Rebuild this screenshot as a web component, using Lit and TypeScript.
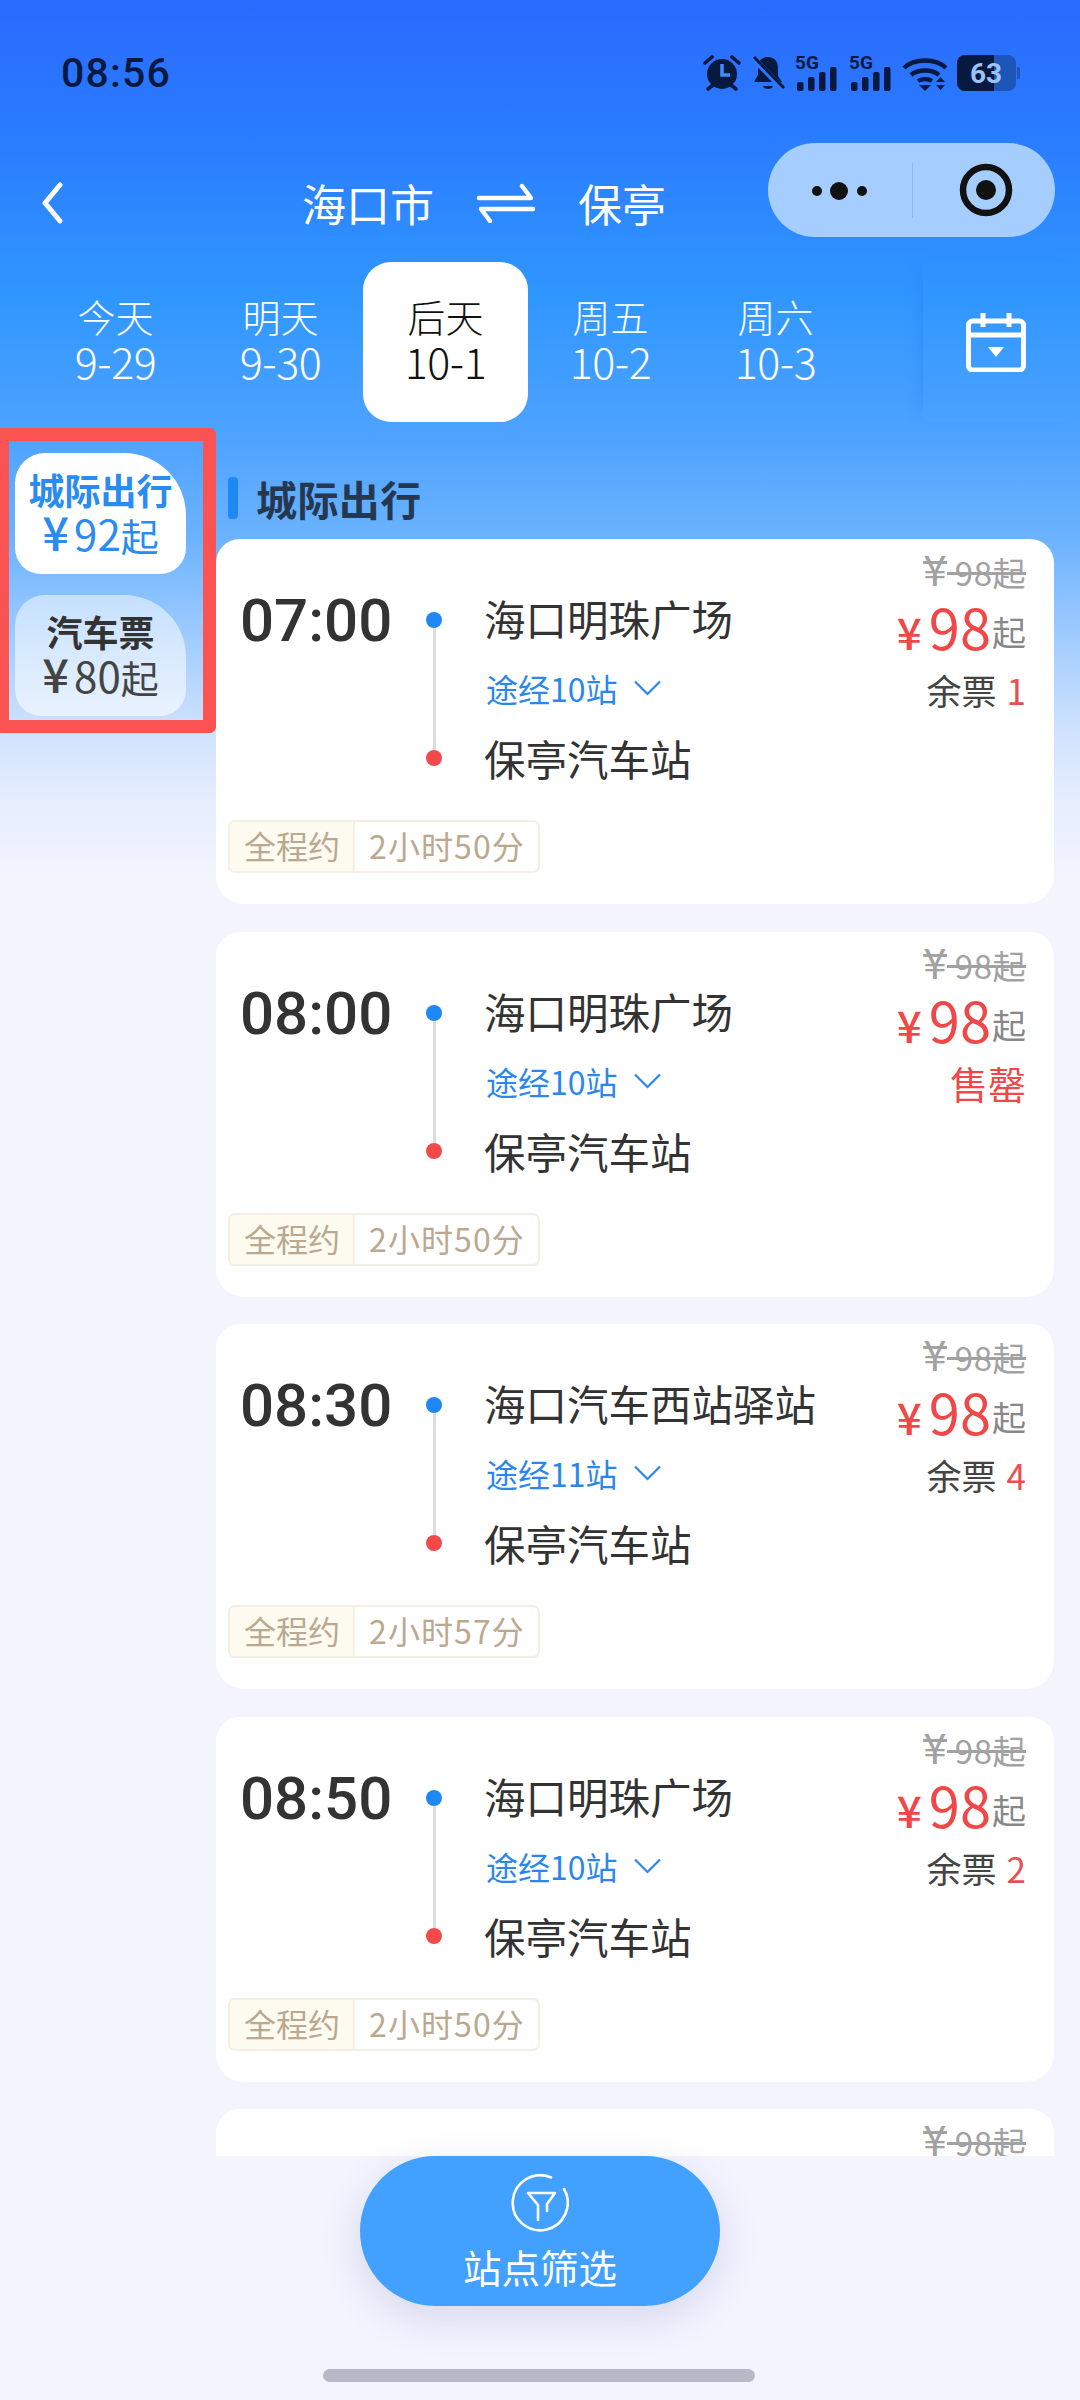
import { LitElement, html, css, svg } from "lit";
import { customElement } from "lit/decorators.js";

interface Trip { time: string; from: string; via: string; dur: string; left: string; sold?: boolean; }
const trips: Trip[] = [
  { time: "07:00", from: "海口明珠广场", via: "途经10站", dur: "2小时50分", left: "1" },
  { time: "08:00", from: "海口明珠广场", via: "途经10站", dur: "2小时50分", left: "", sold: true },
  { time: "08:30", from: "海口汽车西站驿站", via: "途经11站", dur: "2小时57分", left: "4" },
  { time: "08:50", from: "海口明珠广场", via: "途经10站", dur: "2小时50分", left: "2" },
];
const days = [["今天", "9-29"], ["明天", "9-30"], ["后天", "10-1"], ["周五", "10-2"], ["周六", "10-3"]];

const signal = svg`<svg width="42" height="36" viewBox="0 0 42 36" class="ic">
  <text x="0" y="14" font-family="Roboto" font-weight="700" font-size="19" fill="#07193f">5G</text>
  <rect x="2" y="27" width="6.5" height="9" rx="2" fill="#07193f"/><rect x="13" y="22" width="6.5" height="14" rx="2" fill="#07193f"/>
  <rect x="24" y="17" width="6.5" height="19" rx="2" fill="#07193f"/><rect x="35" y="12" width="6.5" height="24" rx="2" fill="#07193f"/></svg>`;

@customElement("app-root")
export class AppRoot extends LitElement {
  static styles = css`
    :host { display: block; width: 1080px; height: 2400px; position: relative; overflow: hidden;
      font-family: "Noto Sans CJK SC", "Noto Sans", sans-serif; color: #333;
      background: linear-gradient(180deg, #2a6aff 0, #2a7bff 130px, #3097ff 300px, #4fa3ff 440px, #6cb3ff 540px, #a6cfff 650px, #cfe2fd 730px, #e6edfe 800px, #f3f4fe 880px, #f3f4fe 100%); }
    .status { height: 143px; display: flex; justify-content: space-between; padding: 55px 60px 0 61px; box-sizing: border-box; color: #07193f; }
    .clock { font: 500 41px/36px Roboto, sans-serif; letter-spacing: 1.2px; }
    .icons { display: flex; height: 36px; }
    .ic { display: block; }
    .al { margin-right: 10px; } .mu { margin-right: 10px; } .s1 { margin-right: 12px; } .s2 { margin-right: 11px; } .wi { margin-right: 9px; }
    .nav { height: 119px; display: flex; align-items: flex-start; color: #fff; }
    .back { margin: 39px 0 0 41px; }
    .route { display: flex; align-items: center; height: 60px; margin: 30px 0 0 239px; font-size: 44px; line-height: 60px; }
    .swap { margin: 0 43px; }
    .capsule { margin-left: auto; margin-right: 25px; width: 287px; height: 94px; border-radius: 47px; background: #a5cdfe; display: flex; align-items: center; }
    .dots { width: 144px; height: 94px; }
    .sep { width: 1px; height: 55px; background: #8fb8e8; }
    .target { margin-left: 46px; }
    .dates { height: 160px; display: flex; }
    .scroll { width: 923px; box-sizing: border-box; padding-left: 33px; display: flex; }
    .day { width: 165px; height: 160px; border-radius: 28px; color: #fff; text-align: center; font-size: 38px; line-height: 45px; box-sizing: border-box; padding-top: 31px; font-weight: 300; }
    .day span { display: block; font-size: 43px; letter-spacing: -.5px; }
    .day.on { background: #fff; color: #111; }
    .cal { flex: 1; display: flex; padding: 50px 0 0 43px; box-sizing: border-box; box-shadow: -12px 0 16px -12px rgba(20,110,230,.35); }
    .main { display: flex; height: 1734px; overflow: hidden; }
    .side { width: 216px; flex: none; padding: 31px 0 0 15px; box-sizing: border-box; }
    .tab { width: 171px; height: 121px; margin-bottom: 21px; border-radius: 30px 62px 26px 26px; text-align: center; box-sizing: border-box; padding-top: 16px; background: linear-gradient(180deg, rgba(255,255,255,.5), rgba(255,255,255,.6)); color: #444; font-size: 38px; line-height: 41px; }
    .tab.on { background: #fff; color: #2a8bf0; }
    .tab b { display: block; font-size: 36px; font-weight: 600; color: #333; }
    .tab.on b { color: #2a8bf0; }
    .tab i { font-style: normal; font-size: 42px; margin-left: 5px; }
    .tab .yen { font-size: 47px; font-weight: 500; line-height: 41px; }
    .yen { font-size: 42px; }
    .list { flex: 1; padding-right: 26px; }
    .head { height: 117px; display: flex; align-items: center; padding: 35px 0 0 12px; box-sizing: border-box; font-size: 41px; font-weight: 600; color: #26384f; letter-spacing: .4px; }
    .head::before { content: ""; width: 10px; height: 42px; border-radius: 4px; background: #1e88f5; margin-right: 18px; }
    .card { height: 365px; margin-bottom: 27.5px; background: #fff; border-radius: 24px 24px 28px 28px; box-sizing: border-box; padding: 0 28px 0 24px; }
    .top { display: flex; height: 281px; }
    .time { width: 186px; flex: none; margin-top: 42px; font: 500 60px/80px Roboto, sans-serif; color: #333; }
    .rail { width: 16px; flex: none; height: 154px; margin-top: 73px; display: flex; flex-direction: column; align-items: center; }
    .dot { width: 16px; height: 16px; border-radius: 50%; background: #1e88f5; flex: none; }
    .dot.end { background: #f24a4a; }
    .rail span { width: 3px; flex: 1; background: #dcdcdc; }
    .stops { margin-left: 42px; flex: 1; padding-top: 49px; font-size: 41.5px; line-height: 60px; color: #333; }
    .via { margin: 10px 0; height: 60px; display: flex; align-items: center; font-size: 32px; color: #2b87ee; padding-left: 2px; }
    .via svg { margin-left: 16px; }
    .price { text-align: right; padding-top: 9px; white-space: nowrap; }
    .old { font-size: 33px; line-height: 40px; color: #a2a2a2; text-decoration: line-through; letter-spacing: .5px; }
    .now { margin-top: 2px; height: 64px; line-height: 64px; font-size: 34px; color: #888; }
    .now em { font-style: normal; color: #f04848; font-size: 56px; margin-right: 1px; }
    .now u { text-decoration: none; color: #f04848; font-size: 44px; font-weight: 500; margin-right: 7px; }
    .now small { font-size: 34px; position: relative; top: -4px; }
    .left { margin-top: 7px; font-size: 35px; line-height: 50px; color: #444; }
    .left span { color: #e8504f; margin-left: 10px; }
    .sold { color: #f04848; font-size: 38px; }
    .tags { margin-left: -12px; display: inline-flex; height: 53px; border: 2px solid #f4efe2; border-radius: 7px; box-sizing: border-box; font-size: 32px; line-height: 47px; color: #bba98f; overflow: hidden; }
    .tags span:first-child { background: #fdfaf0; padding: 0 13px 0 14px; border-right: 2px solid #f4efe2; }
    .tags span:last-child { padding: 0 13px 0 14px; letter-spacing: 1.1px; }
    .filter { position: absolute; left: 360px; top: 2156px; width: 360px; height: 150px; border-radius: 75px; background: #42a0ff; box-shadow: 0 12px 40px rgba(60,70,130,.16); color: #fff; text-align: center; font-size: 38.5px; line-height: 50px; box-sizing: border-box; padding-top: 18px; }
    .filter svg { display: block; margin: 0 auto 9px; }
    .home { position: absolute; left: 323px; top: 2369px; width: 432px; height: 13px; border-radius: 7px; background: #b8b8c6; }
    .mark { position: absolute; left: -4px; top: 428px; width: 220px; height: 305px; box-sizing: border-box; border: 13px solid #fb5352; border-radius: 6px; }
  `;

  card(t: Trip) {
    return html`<div class="card">
      <div class="top">
        <div class="time">${t.time}</div>
        <div class="rail"><div class="dot"></div><span></span><div class="dot end"></div></div>
        <div class="stops">
          <div>${t.from}</div>
          <div class="via">${t.via}<svg width="27" height="16" viewBox="0 0 27 16" fill="none" stroke="#2b87ee" stroke-width="2.2"><path d="M1 1.5 13.5 14 26 1.5"/></svg></div>
          <div>保亭汽车站</div>
        </div>
        <div class="price">
          <div class="old"><span class="yen">¥</span> 98起</div>
          <div class="now"><u>¥</u><em>98</em><small>起</small></div>
          ${t.sold ? html`<div class="left sold">售罄</div>` : html`<div class="left">余票<span>${t.left}</span></div>`}
        </div>
      </div>
      <div class="tags"><span>全程约</span><span>${t.dur}</span></div>
    </div>`;
  }

  render() {
    return html`
      <div class="status">
        <div class="clock">08:56</div>
        <div class="icons">
          <svg class="ic al" width="38" height="36" viewBox="0 0 38 36"><circle cx="19" cy="19" r="15" fill="#07193f"/><path d="M19 9v11h8" stroke="#3b8cff" stroke-width="3.6" fill="none"/><path d="M2 8 9 2M36 8 29 2M5 34l5-4M33 34l-5-4" stroke="#07193f" stroke-width="3.6" stroke-linecap="round"/></svg>
          <svg class="ic mu" width="34" height="36" viewBox="0 0 34 36"><path d="M17 2c7 0 10 5 10 11v8l4 6H3l4-7v-7C7 7 10 2 17 2Z" fill="#07193f"/><path d="M12 31h10c-1 4-9 4-10 0Z" fill="#07193f"/><path d="M2 3 32 34" stroke="#2a78ff" stroke-width="6"/><path d="M3 2 33 33" stroke="#07193f" stroke-width="3"/></svg>
          <span class="s1">${signal}</span><span class="s2">${signal}</span>
          <svg class="ic wi" width="46" height="36" viewBox="0 0 46 36" fill="none" stroke="#07193f" stroke-width="4.4"><path d="M2 13C12 3 34 3 44 13"/><path d="M9 20c7-6 21-6 28 0"/><path d="M16 26c4-2.5 10-2.5 14 0"/><path d="M17 30h12l-6 6Z" fill="#07193f" stroke="none"/><path d="M34 27h9l-4.5-5ZM34 30h9l-4.5 5Z" fill="#07193f" stroke="none"/></svg>
          <svg class="ic" width="63" height="36" viewBox="0 0 63 36"><rect x="0" y="0" width="59" height="36" rx="8" fill="#1c56b8"/><path d="M60 12h1a2 2 0 0 1 2 2v8a2 2 0 0 1-2 2h-1Z" fill="#1c56b8"/><path d="M8 0h29v36H8a8 8 0 0 1-8-8V8a8 8 0 0 1 8-8Z" fill="#07193f"/><text x="13" y="28" font-family="Roboto" font-weight="700" font-size="28" fill="#9cc2f8">63</text></svg>
        </div>
      </div>
      <div class="nav">
        <svg class="back" width="22" height="42" viewBox="0 0 22 42" fill="none" stroke="#fff" stroke-width="5" stroke-linecap="round" stroke-linejoin="round"><path d="M19 3 4 21l15 18"/></svg>
        <div class="route">海口市
          <svg class="swap" width="58" height="40" viewBox="0 0 58 40" fill="none" stroke="#fff" stroke-width="4.4" stroke-linecap="round" stroke-linejoin="round"><path d="M2 15h52L45 3"/><path d="M56 26H4l9 12"/></svg>
          保亭</div>
        <div class="capsule">
          <svg class="dots" viewBox="0 0 144 94"><circle cx="49" cy="48" r="5" fill="#111"/><circle cx="71" cy="48" r="9" fill="#111"/><circle cx="94" cy="48" r="5" fill="#111"/></svg>
          <div class="sep"></div>
          <svg class="target" width="54" height="54" viewBox="0 0 54 54"><circle cx="27" cy="27" r="23" fill="none" stroke="#111" stroke-width="6.5"/><circle cx="27" cy="27" r="10" fill="#111"/></svg>
        </div>
      </div>
      <div class="dates">
        <div class="scroll">
          ${days.map((d, i) => html`<div class="day ${i === 2 ? "on" : ""}">${d[0]}<span>${d[1]}</span></div>`)}
        </div>
        <div class="cal">
          <svg width="60" height="60" viewBox="0 0 60 60" fill="none" stroke="#fff" stroke-width="5"><rect x="2.5" y="9" width="55" height="49" rx="4"/><path d="M2 23h56M17 1v14M43 1v14"/><path d="M22 35h16l-8 10Z" fill="#fff" stroke="none"/></svg>
        </div>
      </div>
      <div class="main">
        <div class="side">
          <div class="tab on"><b>城际出行</b><span class="yen">¥</span><i>92</i>起</div>
          <div class="tab"><b>汽车票</b><span class="yen">¥</span><i>80</i>起</div>
        </div>
        <div class="list">
          <div class="head">城际出行</div>
          ${trips.map((t) => this.card(t))}
          <div class="card"><div class="top"><div class="time"></div><div class="stops"></div><div class="price"><div class="old"><span class="yen">¥</span> 98起</div></div></div></div>
        </div>
      </div>
      <div class="filter">
        <svg width="58" height="58" viewBox="0 0 58 58" fill="none" stroke="#fff" stroke-width="2.6" stroke-linecap="round" stroke-linejoin="round"><path d="M40 3.5A27.5 27.5 0 1 0 53 15"/><path d="M27 46V31L17 19h27l-8 11v7"/></svg>
        站点筛选
      </div>
      <div class="home"></div>
      <div class="mark"></div>
    `;
  }
}
